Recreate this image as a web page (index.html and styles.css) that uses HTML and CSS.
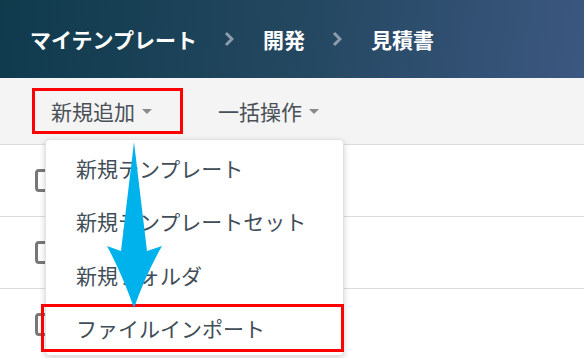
FILE: index.html
```html
<!DOCTYPE html>
<html lang="ja">
<head>
  <meta charset="UTF-8" />
  <meta name="viewport" content="width=device-width, initial-scale=1.0" />
  <title>見積書</title>
  <link rel="stylesheet" href="styles.css">
</head>
<body>
  <header class="header">
    <span class="crumb">マイテンプレート</span>
    <svg class="chevron" width="10" height="16" viewBox="0 0 10 16"><path d="M2 2 L8 8 L2 14" /></svg>
    <span class="crumb">開発</span>
    <svg class="chevron" width="10" height="16" viewBox="0 0 10 16"><path d="M2 2 L8 8 L2 14" /></svg>
    <span class="crumb">見積書</span>
  </header>

  <div class="toolbar">
    <button class="tool-btn marked">新規追加<span class="caret"></span></button>
    <button class="tool-btn">一括操作<span class="caret"></span></button>
  </div>

  <div class="list">
    <div class="row"><span class="checkbox"></span></div>
    <div class="row"><span class="checkbox"></span></div>
    <div class="row"><span class="checkbox"></span></div>
  </div>

  <div class="menu">
    <div class="menu-item">新規テンプレート</div>
    <div class="menu-item">新規テンプレートセット</div>
    <div class="menu-item">新規フォルダ</div>
    <div class="menu-item">ファイルインポート</div>
    <div class="menu-mark"></div>
  </div>

  <svg class="arrow" width="70" height="172" viewBox="0 0 70 172">
    <path d="M34 2 L47 111 L62 106 Q46 134 34 168 Q22 134 7 106 L21 111 Z" />
  </svg>
</body>
</html>
```

FILE: styles.css
```css
body {
  margin: 0;
  font-family: "Noto Sans CJK JP", "Noto Sans", sans-serif;
  background: #fff;
  position: relative;
  overflow: hidden;
  height: 358px;
}
.header {
  height: 78px;
  display: flex;
  align-items: center;
  padding-left: 30px;
  background: linear-gradient(100deg, #0f3a4c 0%, #23475f 50%, #3c5780 100%);
}
.crumb {
  color: #fff;
  font-size: 21px;
  font-weight: bold;
}
.chevron {
  margin: 0 29px 0 27px;
}
.chevron path {
  fill: none;
  stroke: #8c9cab;
  stroke-width: 3;
}
.toolbar {
  height: 66px;
  display: flex;
  align-items: center;
  padding-left: 32px;
  gap: 16px;
  background: #f4f4f4;
  border-bottom: 1px solid #dcdcdc;
}
.tool-btn {
  height: 46px;
  display: flex;
  align-items: center;
  padding: 0 28px 0 16px;
  border: 3px solid transparent;
  background: none;
  font-family: inherit;
  font-size: 21px;
  color: #4a5057;
}
.tool-btn.marked {
  border-color: #ff0000;
}
.caret {
  margin-left: 7px;
  width: 0;
  height: 0;
  border-left: 5px solid transparent;
  border-right: 5px solid transparent;
  border-top: 5px solid #8a8a8a;
}
.row {
  height: 71px;
  border-bottom: 1px solid #dcdcdc;
  display: flex;
  align-items: center;
  padding-left: 35px;
}
.checkbox {
  width: 17px;
  height: 17px;
  border: 3px solid #777;
  border-radius: 4px;
}
.menu {
  position: absolute;
  left: 45px;
  top: 139px;
  width: 297px;
  padding: 1px 0 0;
  background: #fff;
  border: 1px solid #e2e2e2;
  border-radius: 4px;
  box-shadow: 0 2px 6px rgba(0, 0, 0, 0.18);
}
.menu-item {
  height: 53.5px;
  display: flex;
  align-items: center;
  padding-left: 30px;
  font-size: 21px;
  color: #414d57;
}
.menu-mark {
  position: absolute;
  left: -5px;
  top: 164px;
  width: 297px;
  height: 42px;
  border: 3px solid #ff0000;
}
.arrow {
  position: absolute;
  left: 100px;
  top: 140px;
}
.arrow path {
  fill: #00b2ec;
}
```
